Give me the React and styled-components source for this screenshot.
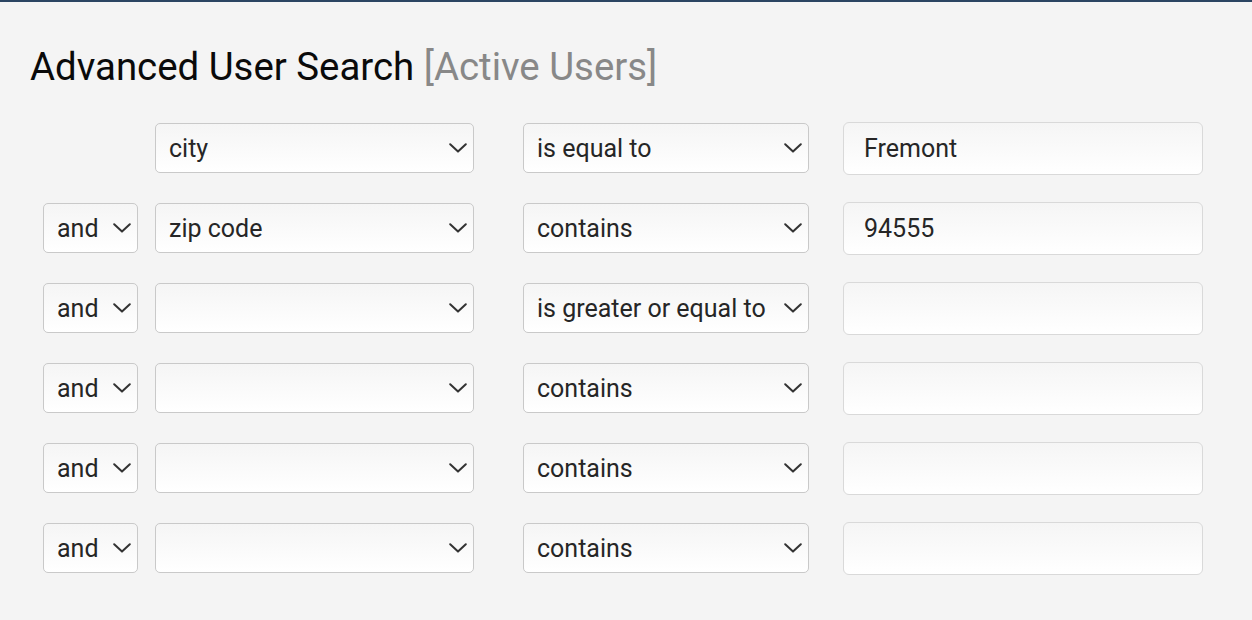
import React from "react";
import styled, { createGlobalStyle } from "styled-components";

const Global = createGlobalStyle`
  html, body { margin: 0; padding: 0; background: #f4f4f4; }
  body { font-family: Roboto, "Liberation Sans", sans-serif; }
  * { box-sizing: border-box; }
`;

const Page = styled.div`
  min-height: 620px;
  border-top: 2px solid #2b4562;
  background: #f4f4f4;
  padding: 43px 0 0 30px;
`;

const Title = styled.h1`
  margin: 0 0 34px 0;
  font-family: Roboto, "Liberation Sans", sans-serif;
  font-weight: 400;
  font-size: 38.4px;
  line-height: 44px;
  color: #0a0a0a;
`;

const Muted = styled.span`
  color: #888888;
`;

const Rows = styled.div`
  display: flex;
  flex-direction: column;
  gap: 30px;
  padding-left: 13px;
`;

const Row = styled.div`
  display: flex;
  align-items: center;
  height: 50px;
`;

const Slot = styled.div`
  position: relative;
  flex: 0 0 ${(p) => p.$w}px;
  width: ${(p) => p.$w}px;
  margin-left: ${(p) => p.$gap || 0}px;
  height: 50px;
`;

const NativeSelect = styled.select`
  appearance: none;
  -webkit-appearance: none;
  width: 100%;
  height: 50px;
  margin: 0;
  padding: 0 26px 0 13px;
  border: 1px solid #c9c9c9;
  border-radius: 5px;
  background: linear-gradient(to bottom, #f5f5f5 0%, #ffffff 100%);
  font-family: Roboto, "Liberation Sans", sans-serif;
  font-size: 25px;
  color: #262626;
  outline: none;
`;

const Chevron = styled.svg`
  position: absolute;
  right: 7px;
  top: 20px;
  width: 18px;
  height: 10px;
  pointer-events: none;
`;

const ValueInput = styled.input`
  flex: 0 0 360px;
  width: 360px;
  height: 53px;
  margin: -1.5px 0 -1.5px 34px;
  padding: 0 20px;
  border: 1px solid #d9d9d9;
  border-radius: 6px;
  background: linear-gradient(to bottom, #f5f5f5 0%, #ffffff 100%);
  font-family: Roboto, "Liberation Sans", sans-serif;
  font-size: 25px;
  color: #262626;
  outline: none;
`;

const Select = ({ value, options, w, gap }) => (
  <Slot $w={w} $gap={gap}>
    <NativeSelect defaultValue={value}>
      {options.map((o) => (
        <option key={o} value={o}>
          {o}
        </option>
      ))}
    </NativeSelect>
    <Chevron viewBox="0 0 18 10">
      <polyline
        points="1.2,1.2 9,8.6 16.8,1.2"
        fill="none"
        stroke="#333"
        strokeWidth="2"
        strokeLinecap="round"
        strokeLinejoin="round"
      />
    </Chevron>
  </Slot>
);

const fields = ["", "city", "zip code", "state", "name", "email"];
const ops = ["is equal to", "contains", "is greater or equal to", "is less or equal to"];

const rows = [
  { conj: null, field: "city", op: "is equal to", value: "Fremont" },
  { conj: "and", field: "zip code", op: "contains", value: "94555" },
  { conj: "and", field: "", op: "is greater or equal to", value: "" },
  { conj: "and", field: "", op: "contains", value: "" },
  { conj: "and", field: "", op: "contains", value: "" },
  { conj: "and", field: "", op: "contains", value: "" },
];

export default function App() {
  return (
    <>
      <Global />
      <Page>
        <Title>
          Advanced User Search <Muted>[Active Users]</Muted>
        </Title>
        <Rows>
          {rows.map((r, i) => (
            <Row key={i}>
              {r.conj ? (
                <Select value={r.conj} options={["and", "or"]} w={95} />
              ) : (
                <Slot $w={95} />
              )}
              <Select value={r.field} options={fields} w={319} gap={17} />
              <Select value={r.op} options={ops} w={286} gap={49} />
              <ValueInput defaultValue={r.value} />
            </Row>
          ))}
        </Rows>
      </Page>
    </>
  );
}
